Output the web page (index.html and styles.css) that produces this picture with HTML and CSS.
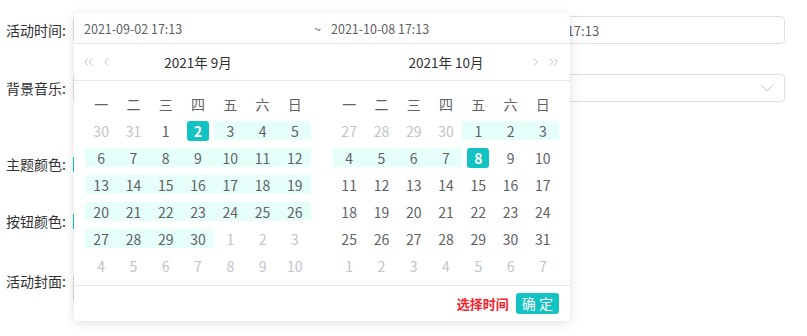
FILE: index.html
```html
<!DOCTYPE html>
<html lang="zh-CN">
<head>
  <meta charset="UTF-8">
  <title>活动设置</title>
  <link rel="stylesheet" href="styles.css">
</head>
<body>

<div class="form">
  <div class="row row-time">
    <label>活动时间:</label>
    <div class="field range">
      <span class="field-end">2021-10-08 17:13</span>
    </div>
  </div>
  <div class="row row-music">
    <label>背景音乐:</label>
    <div class="field select">
      <svg class="caret" width="14" height="8" viewBox="0 0 14 8"><polyline points="1,1 7,7 13,1" fill="none" stroke="#c0c4cc" stroke-width="1"/></svg>
    </div>
  </div>
  <div class="row row-theme">
    <label>主题颜色:</label>
    <div class="swatch"></div>
  </div>
  <div class="row row-button">
    <label>按钮颜色:</label>
    <div class="swatch"></div>
  </div>
  <div class="row row-cover">
    <label>活动封面:</label>
    <div class="upload"></div>
  </div>
</div>

<div class="picker">
  <div class="picker-head">
    <span class="head-start">2021-09-02 17:13</span>
    <span class="head-sep">~</span>
    <span class="head-end">2021-10-08 17:13</span>
  </div>

  <div class="panels">
    <div class="panel">
      <div class="panel-title">
        <div class="arrows">
          <svg width="9" height="8" viewBox="0 0 9 8"><polyline points="4,0.5 0.8,4 4,7.5" fill="none" stroke="#c0c4cc"/><polyline points="8.2,0.5 5,4 8.2,7.5" fill="none" stroke="#c0c4cc"/></svg>
          <svg width="5" height="8" viewBox="0 0 5 8"><polyline points="4,0.5 0.8,4 4,7.5" fill="none" stroke="#c0c4cc"/></svg>
        </div>
        <span class="month">2021年 9月</span>
      </div>
      <div class="grid">
        <span class="wk">一</span><span class="wk">二</span><span class="wk">三</span><span class="wk">四</span><span class="wk">五</span><span class="wk">六</span><span class="wk">日</span>
        <span class="off">30</span><span class="off">31</span><span>1</span><span class="sel"><b>2</b></span><span class="in">3</span><span class="in">4</span><span class="in">5</span>
        <span class="in">6</span><span class="in">7</span><span class="in">8</span><span class="in">9</span><span class="in">10</span><span class="in">11</span><span class="in">12</span>
        <span class="in">13</span><span class="in">14</span><span class="in">15</span><span class="in">16</span><span class="in">17</span><span class="in">18</span><span class="in">19</span>
        <span class="in">20</span><span class="in">21</span><span class="in">22</span><span class="in">23</span><span class="in">24</span><span class="in">25</span><span class="in">26</span>
        <span class="in">27</span><span class="in">28</span><span class="in">29</span><span class="in">30</span><span class="off">1</span><span class="off">2</span><span class="off">3</span>
        <span class="off">4</span><span class="off">5</span><span class="off">6</span><span class="off">7</span><span class="off">8</span><span class="off">9</span><span class="off">10</span>
      </div>
    </div>

    <div class="panel">
      <div class="panel-title">
        <span class="month">2021年 10月</span>
        <div class="arrows right">
          <svg width="5" height="8" viewBox="0 0 5 8"><polyline points="1,0.5 4.2,4 1,7.5" fill="none" stroke="#c0c4cc"/></svg>
          <svg width="9" height="8" viewBox="0 0 9 8"><polyline points="0.8,0.5 4,4 0.8,7.5" fill="none" stroke="#c0c4cc"/><polyline points="5,0.5 8.2,4 5,7.5" fill="none" stroke="#c0c4cc"/></svg>
        </div>
      </div>
      <div class="grid">
        <span class="wk">一</span><span class="wk">二</span><span class="wk">三</span><span class="wk">四</span><span class="wk">五</span><span class="wk">六</span><span class="wk">日</span>
        <span class="off">27</span><span class="off">28</span><span class="off">29</span><span class="off">30</span><span class="in">1</span><span class="in">2</span><span class="in">3</span>
        <span class="in">4</span><span class="in">5</span><span class="in">6</span><span class="in">7</span><span class="sel"><b>8</b></span><span>9</span><span>10</span>
        <span>11</span><span>12</span><span>13</span><span>14</span><span>15</span><span>16</span><span>17</span>
        <span>18</span><span>19</span><span>20</span><span>21</span><span>22</span><span>23</span><span>24</span>
        <span>25</span><span>26</span><span>27</span><span>28</span><span>29</span><span>30</span><span>31</span>
        <span class="off">1</span><span class="off">2</span><span class="off">3</span><span class="off">4</span><span class="off">5</span><span class="off">6</span><span class="off">7</span>
      </div>
    </div>
  </div>

  <div class="picker-foot">
    <span class="pick-time">选择时间</span>
    <button class="ok">确 定</button>
  </div>
</div>

</body>
</html>
```

FILE: styles.css
```css
body {
  margin: 0;
  background-color: #fff;
  font-family: "Noto Sans CJK SC", "Noto Sans", sans-serif;
  font-size: 14px;
  color: #606266;
}

.form {
  padding: 16px 22px 0 6px;
}

.row {
  display: flex;
  align-items: center;
}

.row label {
  width: 67px;
  flex-shrink: 0;
  color: #303133;
  font-size: 14px;
}

.row-time {
  height: 28px;
}

.row-music {
  height: 28px;
  margin-top: 30px;
}

.row-theme {
  height: 30px;
  margin-top: 47px;
}

.row-button {
  height: 30px;
  margin-top: 27px;
}

.row-cover {
  height: 30px;
  margin-top: 29px;
  align-items: flex-start;
  padding-top: 6px;
}

.field {
  flex: 1;
  height: 26px;
  border: 1px solid #dcdfe6;
  border-radius: 4px;
  display: flex;
  align-items: center;
  padding-left: 10px;
  font-size: 13px;
}

.range {
  padding-left: 423px;
}

.select {
  justify-content: flex-end;
  padding-right: 10px;
}

.swatch {
  width: 30px;
  height: 15px;
  background-color: #13c2c2;
}

.upload {
  width: 100px;
  height: 60px;
  margin-top: 5px;
  border: 1px solid #d9d9d9;
}

/* date range popup */
.picker {
  position: absolute;
  left: 74px;
  top: 13px;
  width: 496px;
  height: 308px;
  background-color: #fff;
  border-radius: 4px;
  box-shadow: 0 2px 12px 0 rgba(0, 0, 0, 0.12);
  display: flex;
  flex-direction: column;
}

.picker-head {
  height: 30px;
  border-bottom: 1px solid #e4e7ed;
  display: flex;
  align-items: center;
  font-size: 12.5px;
  color: #606266;
}

.head-start {
  width: 230px;
  padding-left: 10px;
}

.head-sep {
  width: 17px;
}

.panels {
  display: flex;
}

.panel {
  width: 248px;
}

.panel-title {
  height: 36px;
  border-bottom: 1px solid #e4e7ed;
  display: flex;
  align-items: center;
  justify-content: center;
  position: relative;
}

.month {
  color: #303133;
  font-size: 13.5px;
}

.arrows {
  position: absolute;
  left: 10px;
  top: 14px;
  display: flex;
  gap: 11px;
}

.arrows.right {
  left: auto;
  right: 12px;
}

.arrows svg {
  display: block;
}

.grid {
  display: grid;
  grid-template-columns: repeat(7, 1fr);
  grid-auto-rows: 27px;
  padding: 9px 11px 6px;
}

.grid span {
  display: flex;
  align-items: center;
  justify-content: center;
  color: #606266;
  font-size: 14px;
}

.grid .off {
  color: #c0c4cc;
}

.grid .in {
  background-color: #e6fffb;
  background-clip: content-box;
  padding: 4px 0;
}

.grid .sel b {
  display: flex;
  align-items: center;
  justify-content: center;
  width: 22px;
  height: 20px;
  border-radius: 3px;
  background-color: #13c2c2;
  color: #fff;
  font-weight: 700;
}

.picker-foot {
  flex: 1;
  border-top: 1px solid #e4e7ed;
  display: flex;
  align-items: center;
  justify-content: flex-end;
  padding-right: 11px;
  gap: 7px;
}

.pick-time {
  color: #f5222d;
  font-weight: 700;
  font-size: 13px;
}

.ok {
  height: 21px;
  padding: 0 6px;
  border: none;
  border-radius: 3px;
  background-color: #13c2c2;
  color: #fff;
  font-family: inherit;
  font-size: 14px;
  line-height: 21px;
}
```
